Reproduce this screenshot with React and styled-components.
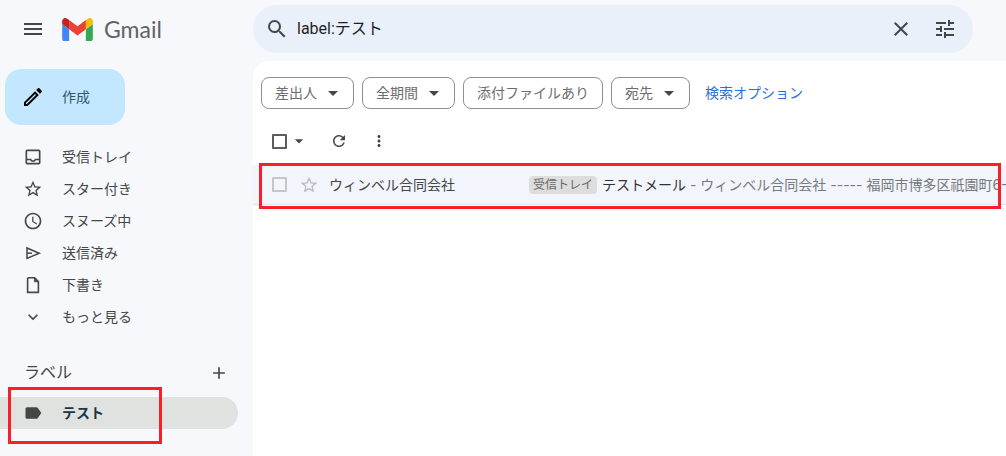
import React, { useState } from "react";
import styled, { createGlobalStyle } from "styled-components";
import {
  MdAdd,
  MdArrowDropDown,
  MdClose,
  MdKeyboardArrowDown,
  MdLabel,
  MdMenu,
  MdMoreVert,
  MdOutlineEdit,
  MdOutlineInbox,
  MdRefresh,
  MdSchedule,
  MdSearch,
  MdStarBorder,
  MdTune,
} from "react-icons/md";

const GlobalStyle = createGlobalStyle`
  * {
    box-sizing: border-box;
  }

  body {
    margin: 0;
    background: #f6f8fc;
    font-family: Roboto, "Noto Sans CJK JP", sans-serif;
    font-size: 14px;
    line-height: 20px;
    color: #444746;
  }

  button, input {
    font: inherit;
    color: inherit;
  }
`;

const Page = styled.div`
  display: grid;
  grid-template-columns: 253px minmax(0, 1fr);
  grid-template-rows: auto 1fr;
  min-height: 100vh;
  overflow: hidden;
`;

const Brand = styled.div`
  display: flex;
  align-items: center;
  padding: 5px 0 8px 21px;
`;

const IconButton = styled.button`
  display: flex;
  align-items: center;
  justify-content: center;
  width: 24px;
  height: 24px;
  padding: 0;
  border: 0;
  background: none;
  font-size: ${props => props.$size || 20}px;
  cursor: pointer;
`;

const LogoLink = styled.a`
  display: flex;
  align-items: center;
  gap: 11px;
  margin-left: 17px;
  font-family: Lato, sans-serif;
  font-size: 23px;
  line-height: 24px;
  color: #5f6368;
  text-decoration: none;
`;

const SearchArea = styled.header`
  padding: 5px 33px 8px 0;
`;

const SearchForm = styled.form`
  display: flex;
  align-items: center;
  height: 48px;
  padding: 0 16px 0 12px;
  border-radius: 24px;
  background: #e9f0fa;
`;

const SearchInput = styled.input`
  flex: 1;
  min-width: 0;
  margin-left: 8px;
  padding: 0;
  border: 0;
  outline: none;
  background: none;
  font-size: 16px;
  line-height: 24px;
  color: #1f1f1f;
`;

const SearchActions = styled.div`
  display: flex;
  gap: 20px;
`;

const Sidebar = styled.aside`
  padding-top: 8px;
`;

const ComposeButton = styled.button`
  display: flex;
  align-items: center;
  gap: 17px;
  height: 56px;
  margin: 0 0 16px 5px;
  padding: 0 35px 0 16px;
  border: 0;
  border-radius: 16px;
  background: #c2e7ff;
  color: #33566c;
  cursor: pointer;

  svg {
    font-size: 24px;
    color: #000;
  }
`;

const NavList = styled.ul`
  margin: 0;
  padding: 0;
  list-style: none;
`;

const NavItem = styled.li`
  position: relative;
`;

const NavLink = styled.a`
  display: flex;
  align-items: center;
  gap: 19px;
  height: 32px;
  margin-right: 15px;
  padding-left: 23px;
  border-radius: 0 16px 16px 0;
  background: ${props => (props.$active ? "#e0e2df" : "none")};
  font-weight: ${props => (props.$active ? 700 : 400)};
  color: ${props => (props.$active ? "#1c3448" : "#444746")};
  text-decoration: none;

  svg {
    width: 20px;
    height: 20px;
    color: #444746;
  }
`;

const LabelsHeader = styled.div`
  display: flex;
  align-items: center;
  justify-content: space-between;
  height: 32px;
  margin: 24px 0 8px;
  padding: 0 22px 0 24px;
`;

const LabelsTitle = styled.h2`
  margin: 0;
  font-size: 16px;
  font-weight: 400;
  line-height: 24px;
`;

const Main = styled.main`
  padding-top: 16px;
  border-radius: 16px 0 0 0;
  background: #fff;
`;

const FilterBar = styled.div`
  display: flex;
  align-items: center;
  gap: 8px;
  padding-left: 8px;
  white-space: nowrap;
`;

const Chip = styled.button`
  display: flex;
  align-items: center;
  gap: 4px;
  height: 32px;
  padding: 0 ${props => (props.$menu ? 8 : 13)}px 0 13px;
  border: 1px solid #8e908f;
  border-radius: 8px;
  background: #fff;
  color: #6b6e6d;
  cursor: pointer;

  svg {
    width: 24px;
    height: 24px;
    color: #444746;
  }
`;

const SearchOptions = styled.a`
  margin-left: 7px;
  color: #2f6fd8;
  text-decoration: none;
`;

const Toolbar = styled.div`
  display: flex;
  align-items: center;
  height: 48px;
  margin-top: 8px;
  padding-left: 19px;
`;

const ToolbarGroup = styled.div`
  display: flex;
  gap: 16px;
  margin-left: 16px;
`;

const Checkbox = styled.input`
  appearance: none;
  flex: none;
  width: 15px;
  height: 15px;
  margin: 0;
  border: 2px solid ${props => (props.$faint ? "#c4c7c9" : "#5a5d5c")};
  border-radius: 1px;

  &:checked {
    background: #444746;
  }
`;

const MailList = styled.ul`
  margin: 0;
  padding: 0;
  list-style: none;
`;

const MailRow = styled.li`
  position: relative;
  display: flex;
  align-items: center;
  height: 40px;
  padding-left: 19px;
  border-bottom: 1px solid #dfe2e8;
  background: #f2f5fc;
  white-space: nowrap;
`;

const StarButton = styled(IconButton)`
  flex: none;
  margin: 0 8px 0 10px;
  color: #b9bcbf;
`;

const Sender = styled.span`
  flex: none;
  width: 200px;
`;

const Tag = styled.span`
  flex: none;
  margin-right: 5px;
  padding: 0 4px;
  border-radius: 4px;
  background: #dddddd;
  font-size: 12px;
  line-height: 18px;
  color: #666;
`;

const Preview = styled.span`
  flex: 1;
  min-width: 0;
  overflow: hidden;
  font-family: Inter, "Noto Sans CJK JP", sans-serif;
  color: #777a7c;
`;

const Subject = styled.span`
  color: #2f3231;
`;

// red frame drawn over the page to point something out
const Highlight = styled.span`
  position: absolute;
  border: 3px solid #fb1d27;
  pointer-events: none;
`;

const LabelHighlight = styled(Highlight)`
  top: -10px;
  bottom: -15px;
  left: 8px;
  width: 154px;
`;

const MailHighlight = styled(Highlight)`
  top: -2px;
  right: 5px;
  bottom: -5px;
  left: 6px;
`;

const GmailLogo = () => (
  <svg width="31" height="23" viewBox="52 42 88 66" aria-hidden="true">
    <path fill="#4285f4" d="M58 108h14V74L52 59v43c0 3.32 2.69 6 6 6" />
    <path fill="#34a853" d="M120 108h14c3.32 0 6-2.69 6-6V59l-20 15" />
    <path fill="#fbbc04" d="M120 48v26l20-15v-8c0-7.42-8.47-11.65-14.4-7.2" />
    <path fill="#ea4335" d="M72 74V48l24 18 24-18v26L96 92" />
    <path fill="#c5221f" d="M52 51v8l20 15V48l-5.6-4.2c-5.94-4.45-14.4-.22-14.4 7.2" />
  </svg>
);

const SentIcon = () => (
  <svg viewBox="0 0 20 20" fill="none" stroke="currentColor" strokeWidth="1.5">
    <path d="M4 5v10.4L16.2 10.2z" />
    <path d="M4 10.2h5" />
  </svg>
);

const DraftIcon = () => (
  <svg viewBox="0 0 20 20" fill="none" stroke="currentColor" strokeWidth="1.6">
    <path d="M5.6 2.8h6l3.8 3.8v10.8H4.6V3.4z" strokeLinejoin="round" />
    <path d="M11.4 2.8v4h4z" fill="currentColor" strokeWidth="0.8" />
  </svg>
);

const folders = [
  { name: "受信トレイ", icon: MdOutlineInbox },
  { name: "スター付き", icon: MdStarBorder },
  { name: "スヌーズ中", icon: MdSchedule },
  { name: "送信済み", icon: SentIcon },
  { name: "下書き", icon: DraftIcon },
  { name: "もっと見る", icon: MdKeyboardArrowDown },
];

const filters = [
  { name: "差出人", menu: true },
  { name: "全期間", menu: true },
  { name: "添付ファイルあり", menu: false },
  { name: "宛先", menu: true },
];

const App = () => {
  const [query, setQuery] = useState("label:テスト");

  return (
    <Page>
      <GlobalStyle />
      <Brand>
        <IconButton type="button" $size={24} aria-label="メインメニュー"><MdMenu /></IconButton>
        <LogoLink href="#">
          <GmailLogo />
          Gmail
        </LogoLink>
      </Brand>
      <SearchArea>
        <SearchForm role="search" onSubmit={evt => evt.preventDefault()}>
          <IconButton type="submit" $size={24} aria-label="検索"><MdSearch /></IconButton>
          <SearchInput aria-label="メールを検索" value={query} onChange={evt => {
            setQuery(evt.target.value);
          }} />
          <SearchActions>
            <IconButton type="button" $size={24} aria-label="検索をクリア" onClick={() => setQuery("")}><MdClose /></IconButton>
            <IconButton type="button" $size={24} aria-label="検索オプションを表示"><MdTune /></IconButton>
          </SearchActions>
        </SearchForm>
      </SearchArea>

      <Sidebar>
        <ComposeButton type="button">
          <MdOutlineEdit />
          作成
        </ComposeButton>
        <nav>
          <NavList>
            {folders.map(({ name, icon: Icon }) => (
              <NavItem key={name}>
                <NavLink href="#"><Icon />{name}</NavLink>
              </NavItem>
            ))}
          </NavList>
          <LabelsHeader>
            <LabelsTitle>ラベル</LabelsTitle>
            <IconButton type="button" aria-label="新しいラベルを作成"><MdAdd /></IconButton>
          </LabelsHeader>
          <NavList>
            <NavItem>
              <NavLink href="#" $active aria-current="page"><MdLabel />テスト</NavLink>
              <LabelHighlight />
            </NavItem>
          </NavList>
        </nav>
      </Sidebar>

      <Main>
        <FilterBar>
          {filters.map(({ name, menu }) => (
            <Chip key={name} type="button" $menu={menu}>
              {name}
              {menu && <MdArrowDropDown />}
            </Chip>
          ))}
          <SearchOptions href="#">検索オプション</SearchOptions>
        </FilterBar>
        <Toolbar>
          <Checkbox type="checkbox" aria-label="すべて選択" />
          <IconButton type="button" aria-label="選択"><MdArrowDropDown /></IconButton>
          <ToolbarGroup>
            <IconButton type="button" $size={18} aria-label="更新"><MdRefresh /></IconButton>
            <IconButton type="button" $size={18} aria-label="その他"><MdMoreVert /></IconButton>
          </ToolbarGroup>
        </Toolbar>
        <MailList>
          <MailRow>
            <Checkbox type="checkbox" $faint aria-label="メールを選択" />
            <StarButton type="button" aria-label="スターを付ける"><MdStarBorder /></StarButton>
            <Sender>ウィンベル合同会社</Sender>
            <Tag>受信トレイ</Tag>
            <Preview>
              <Subject>テストメール</Subject> - ウィンベル合同会社 ----- 福岡市博多区祇園町6-
            </Preview>
            <MailHighlight />
          </MailRow>
        </MailList>
      </Main>
    </Page>
  );
};

export default App;
